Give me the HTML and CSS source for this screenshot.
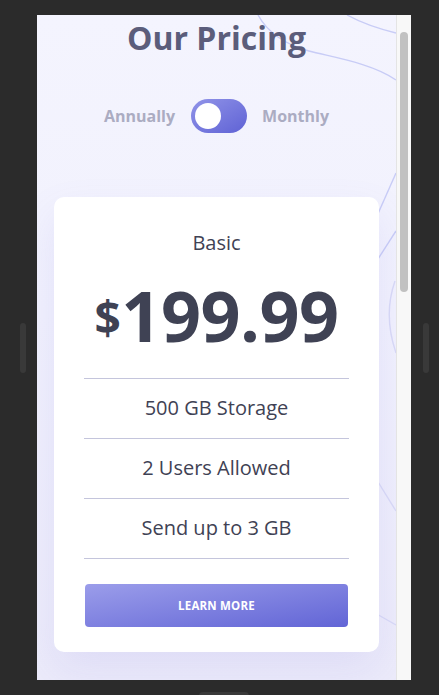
FILE: index.html
```html
<!DOCTYPE html>
<html lang="en">
<head>
<meta charset="utf-8">
<title>Our Pricing</title>
<link rel="stylesheet" href="styles.css">
</head>
<body>
<div class="stage">
  <div class="handle handle-left"></div>
  <div class="device">
    <div class="screen">
      <svg class="decor" viewBox="0 0 359 665" width="359" height="665" aria-hidden="true">
        <path d="M221,0 C232,20 250,30 272,36 S335,48 359,65" />
        <path d="M310,0 Q330,11 359,18" />
        <path d="M359,158 L328,228" />
        <path d="M359,216 L332,258" />
        <path d="M358,266 Q346,300 359,338" class="faint" />
        <path d="M338,462 L359,496" class="faint" />
        <path d="M338,598 L359,610" class="faint" />
      </svg>
      <div class="content">
        <h1 class="title">Our Pricing</h1>
        <div class="switch-row">
          <span class="switch-label">Annually</span>
          <div class="switch"><span class="knob"></span></div>
          <span class="switch-label">Monthly</span>
        </div>
        <div class="card">
          <div class="plan">Basic</div>
          <div class="price"><span class="currency">$</span>199.99</div>
          <ul class="features">
            <li>500 GB Storage</li>
            <li>2 Users Allowed</li>
            <li>Send up to 3 GB</li>
          </ul>
          <a class="btn" href="#">LEARN MORE</a>
        </div>
      </div>
    </div>
    <div class="scrollbar"><div class="thumb"></div></div>
  </div>
  <div class="handle handle-right"></div>
</div>
<div class="home-bar"></div>
</body>
</html>
```

FILE: styles.css
```css
* { box-sizing: border-box; }

html, body {
  margin: 0;
  padding: 0;
  background: #2b2b2b;
  height: 695px;
  overflow: hidden;
  font-family: "Open Sans", "Liberation Sans", sans-serif;
}

.stage {
  display: flex;
  align-items: center;
  padding-top: 15px;
}

.handle {
  width: 6px;
  height: 50px;
  border-radius: 3px;
  background: #393939;
}
.handle-left { margin-left: 20px; margin-right: 11px; }
.handle-right { margin-left: 12px; }

.device {
  width: 374px;
  height: 665px;
  display: flex;
  background: #f4f4fe;
  overflow: hidden;
}

.screen {
  position: relative;
  width: 359px;
  height: 665px;
  background: linear-gradient(to bottom, #f4f4fe 0%, #f1f1fd 45%, #ecebfa 100%);
  overflow: hidden;
}

.decor {
  position: absolute;
  left: 0;
  top: 0;
  fill: none;
  stroke: #c8ccf6;
  stroke-width: 1.4;
}
.decor .faint { stroke: #d8d9f6; }

.content {
  position: relative;
  display: flex;
  flex-direction: column;
  align-items: center;
  padding-top: 3px;
}

.title {
  margin: 0;
  font-size: 32px;
  line-height: 40px;
  font-weight: 700;
  color: #5b5d7b;
}

.switch-row {
  margin-top: 41px;
  display: flex;
  align-items: center;
  height: 34px;
}

.switch-label {
  font-size: 16px;
  font-weight: 700;
  color: #abacc2;
}

.switch {
  width: 56px;
  height: 34px;
  border-radius: 17px;
  margin: 0 15px 0 16px;
  padding: 4px;
  display: flex;
  align-items: center;
  background: linear-gradient(to bottom right, #9194e8, #5f62d5);
}

.knob {
  width: 26px;
  height: 26px;
  border-radius: 50%;
  background: #ffffff;
}

.card {
  margin-top: 64px;
  width: 325px;
  background: #ffffff;
  border-radius: 10px;
  padding: 32px 30px 25px;
  box-shadow: 0 18px 40px rgba(120, 118, 220, 0.12);
  display: flex;
  flex-direction: column;
  color: #3f4254;
}

.plan {
  text-align: center;
  font-size: 20px;
  line-height: 28px;
}

.price {
  margin-top: 18px;
  text-align: center;
  font-size: 70px;
  line-height: 80px;
  font-weight: 700;
  letter-spacing: -0.5px;
}

.currency {
  font-size: 46px;
  vertical-align: 7px;
  margin-right: 1px;
}

.features {
  list-style: none;
  margin: 21px 0 0;
  padding: 0;
  border-top: 1px solid #c4c5dc;
}

.features li {
  height: 60px;
  line-height: 58px;
  text-align: center;
  font-size: 20px;
  border-bottom: 1px solid #c4c5dc;
}

.btn {
  margin: 25px 1px 0;
  height: 43px;
  border-radius: 4px;
  display: flex;
  align-items: center;
  justify-content: center;
  text-decoration: none;
  color: #ffffff;
  font-size: 11.5px;
  font-weight: 700;
  letter-spacing: 0.2px;
  background: linear-gradient(to bottom right, #9b9dea, #6265d6);
}

.scrollbar {
  width: 15px;
  height: 665px;
  background: #f8f8f8;
  border-left: 1px solid #e4e4e4;
  padding: 17px 3px 0 3px;
}

.thumb {
  width: 8px;
  height: 260px;
  border-radius: 4px;
  background: #c1c1c1;
}

.home-bar {
  margin: 12px 0 0 199px;
  width: 50px;
  height: 10px;
  border-radius: 4px;
  background: #393939;
}
```
